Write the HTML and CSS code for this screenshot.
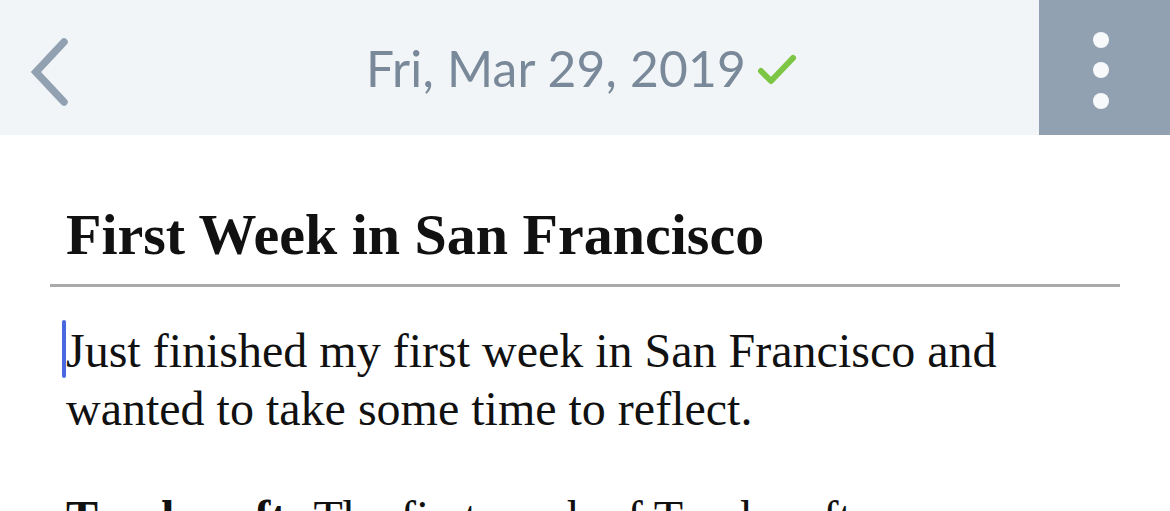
FILE: index.html
```html
<!DOCTYPE html>
<html>
<head>
<meta charset="utf-8">
<link rel="stylesheet" href="styles.css">
</head>
<body>
<div class="app">
  <header class="topbar">
    <button class="back" aria-label="Back">
      <svg width="44" height="70" viewBox="0 0 44 70"><path d="M33 4 L5 34 L33 64" fill="none" stroke="#91a1b1" stroke-width="7.5" stroke-linecap="round" stroke-linejoin="miter"/></svg>
    </button>
    <div class="date">
      <span class="date-text">Fri, Mar 29, 2019</span>
      <svg class="check" width="40" height="32" viewBox="0 0 40 32"><path d="M4 17 L14 27 L36 4" fill="none" stroke="#7dc645" stroke-width="6" stroke-linecap="round" stroke-linejoin="round"/></svg>
    </div>
    <button class="menu" aria-label="More">
      <span class="dot"></span><span class="dot"></span><span class="dot"></span>
    </button>
  </header>
  <main class="entry">
    <h1 class="title">First Week in San Francisco</h1>
    <div class="rule"></div>
    <div class="body">
      <p><span class="cursor"></span>Just finished my first week in San Francisco and wanted to take some time to reflect.</p>
      <p><b>Trackcraft:</b> The first week of Trackcraft headquarters</p>
    </div>
  </main>
</div>
</body>
</html>
```

FILE: styles.css
```css
* { box-sizing: border-box; }
html, body { margin: 0; padding: 0; background: #ffffff; }
body { width: 1170px; height: 511px; overflow: hidden; }
.app { display: flex; flex-direction: column; }
.topbar {
  height: 135px;
  background: #f2f5f8;
  display: flex;
  align-items: stretch;
}
.back {
  border: 0; background: none; padding: 0;
  width: 130px;
  display: flex; align-items: center;
  padding-left: 31px;
  padding-top: 10px;
}
.date {
  flex: 1;
  display: flex; align-items: center; justify-content: center;
  padding-right: 6px;
  gap: 11px;
}
.date-text {
  font-family: Lato, "Noto Sans", sans-serif;
  font-size: 49.7px;
  color: #7a8999;
  letter-spacing: 0.2px;
}
.check { margin-top: 4px; }
.menu {
  width: 131px;
  border: 0; padding: 5px 7px 0 0;
  background: #91a1b1;
  display: flex; flex-direction: column; align-items: center; justify-content: center;
  gap: 14.5px;
}
.dot { width: 16px; height: 16px; border-radius: 50%; background: #f7f9fb; display: block; }
.entry { padding: 0 50px; }
.title {
  margin: 0;
  padding: 68px 0 0 16px;
  font-family: "Liberation Serif", serif;
  font-weight: bold;
  font-size: 58px;
  line-height: 64px;
  color: #111;
}
.rule { height: 3px; background: #aaaaaa; margin-top: 17px; }
.body {
  padding-left: 16px;
  font-family: "Liberation Serif", serif;
  font-size: 48px;
  line-height: 58px;
  color: #111;
}
.body p { margin: 33px 0 51px 0; max-width: 960px; }
.body p + p { margin-top: 0; }
.cursor {
  display: inline-block;
  width: 4px; height: 58px;
  background: #4a68e0;
  border-radius: 2px;
  vertical-align: -11px;
  margin-left: -4px;
}
```
